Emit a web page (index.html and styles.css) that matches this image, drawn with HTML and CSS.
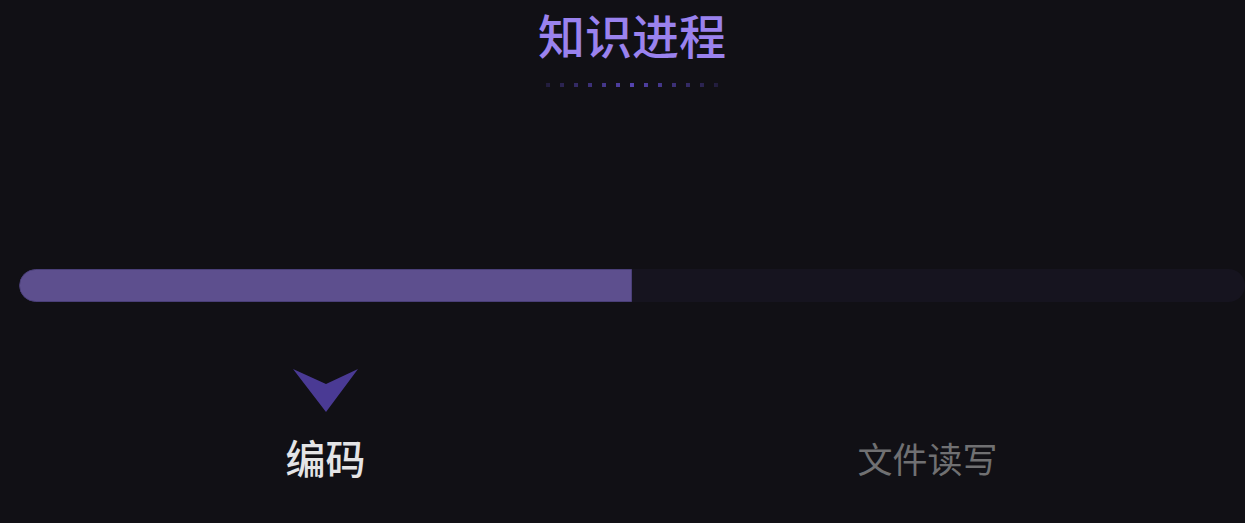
FILE: index.html
```html
<!DOCTYPE html>
<html lang="zh">
<head>
<meta charset="utf-8">
<title>知识进程</title>
<link rel="stylesheet" href="styles.css">
</head>
<body>
<div class="page">
  <header class="header">
    <h1 class="title">知识进程</h1>
    <div class="dots"></div>
  </header>
  <div class="track">
    <div class="fill" style="width:50%"></div>
  </div>
  <div class="tabs">
    <div class="tab active">
      <svg class="pointer" width="65" height="43" viewBox="0 0 65 43"><polygon points="0,0 33,15 65,0 33,43" fill="#4a3a94"/></svg>
      <span class="label">编码</span>
    </div>
    <div class="tab inactive">
      <span class="label">文件读写</span>
    </div>
  </div>
</div>
</body>
</html>
```
FILE: styles.css
```css
html, body {
  margin: 0;
  padding: 0;
  background: #111015;
  overflow: hidden;
}
.page {
  width: 1264px;
  height: 523px;
  box-sizing: border-box;
  padding: 0 19px;
  font-family: "Noto Sans CJK SC", "Noto Sans", sans-serif;
}
.header {
  display: flex;
  flex-direction: column;
  align-items: center;
  padding-top: 10px;
}
.title {
  margin: 0;
  font-size: 47px;
  line-height: 47px;
  font-weight: 500;
  color: #9a82ee;
  letter-spacing: 0;
}
.dots {
  margin-top: 26px;
  width: 172px;
  height: 4px;
  background: repeating-linear-gradient(90deg, #5544b0 0 4px, transparent 4px 14px);
  -webkit-mask-image: linear-gradient(90deg, rgba(0,0,0,.25), #000 50%, rgba(0,0,0,.25));
  mask-image: linear-gradient(90deg, rgba(0,0,0,.25), #000 50%, rgba(0,0,0,.25));
}
.track {
  margin-top: 182px;
  height: 33px;
  border-radius: 17px;
  background: #16141f;
  overflow: hidden;
}
.fill {
  height: 100%;
  box-sizing: border-box;
  background: #5d4f8e;
  border: 1px solid #4a3f78;
  border-radius: 17px 0 0 17px;
}
.tabs {
  display: grid;
  grid-template-columns: 1fr 1fr;
}
.tab {
  display: flex;
  flex-direction: column;
  align-items: center;
}
.pointer {
  display: block;
  margin-top: 67px;
}
.active .label {
  margin-top: 21px;
  font-size: 40px;
  line-height: 48px;
  font-weight: 500;
  color: #e4e4e6;
}
.inactive {
  padding-right: 22px;
}
.inactive .label {
  margin-top: 134px;
  font-size: 35px;
  line-height: 44px;
  color: #707072;
}
```
